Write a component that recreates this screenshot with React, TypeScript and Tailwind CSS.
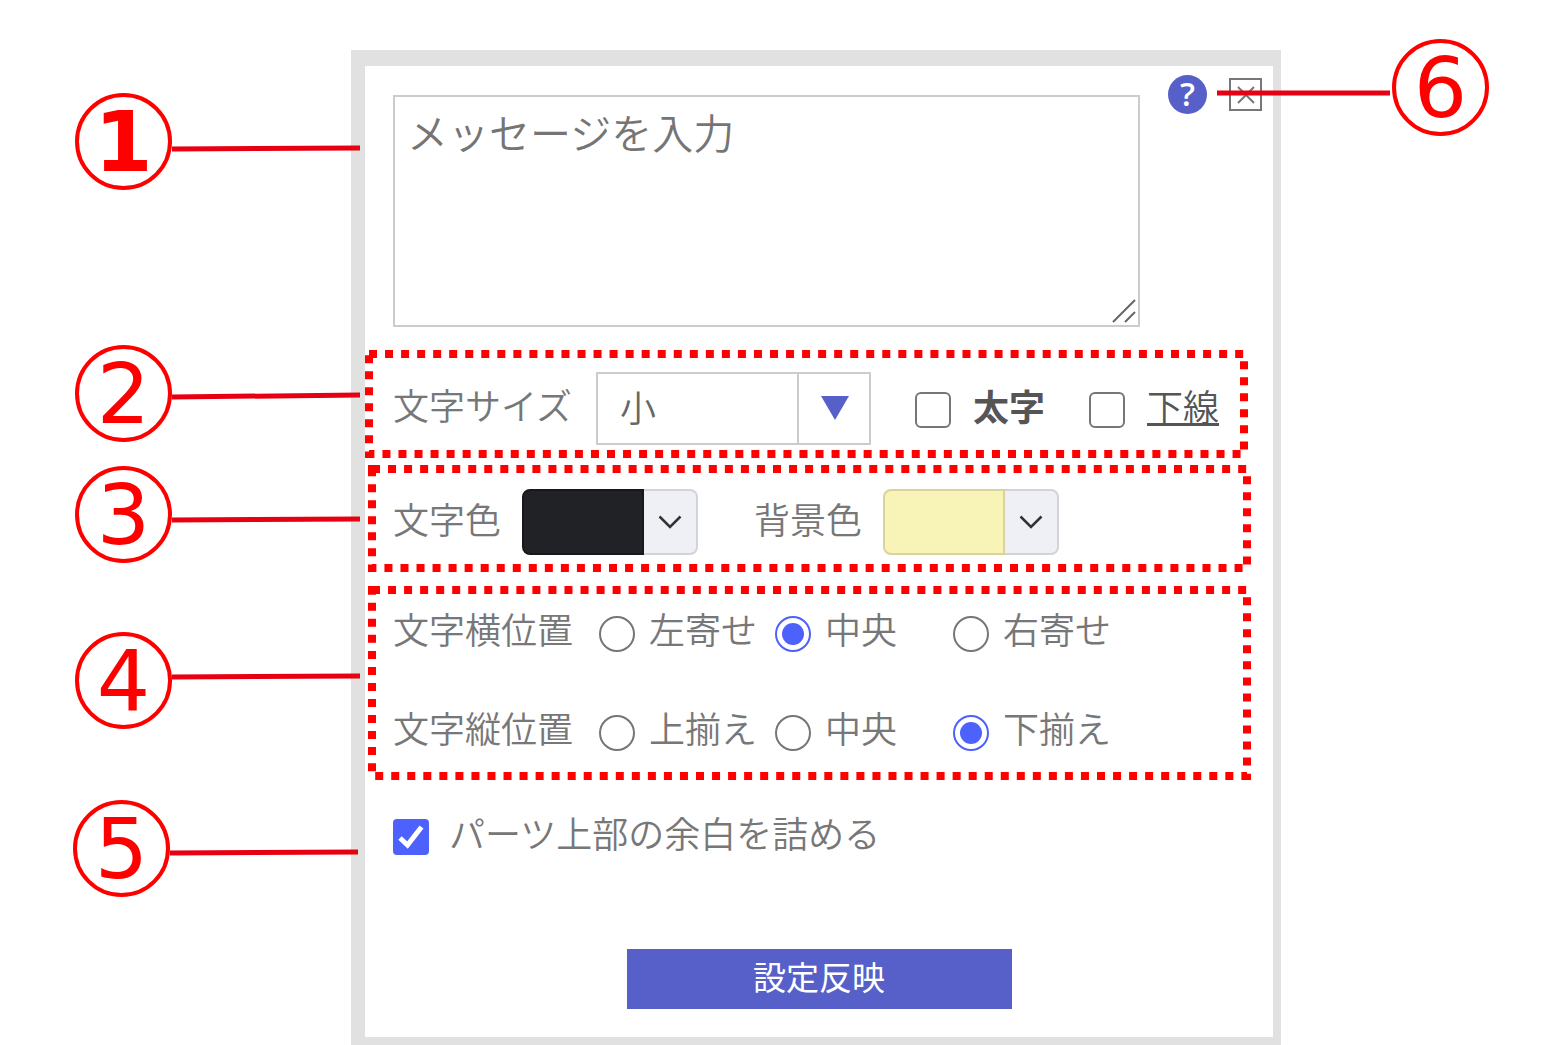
import { useState } from "react";
import type { ReactNode } from "react";

interface CalloutProps {
	number: number;
	from: number;
	to: number;
	className: string;
	bold?: boolean;
	flipped?: boolean;
}

interface RadioRowProps {
	name: string;
	legend: string;
	options: string[];
	value: string;
	onChange: (value: string) => void;
}

interface CheckFieldProps {
	checked: boolean;
	onChange: (checked: boolean) => void;
	className?: string;
	children: ReactNode;
}

interface ColorPickerProps {
	label: string;
	swatchClass: string;
}

// Numbered circle with a leader line that runs to the panel
function Callout({ number, from, to, className, bold, flipped }: CalloutProps) {
	return (
		<div
			className={`pointer-events-none absolute z-10 flex ${
				flipped ? "flex-row-reverse" : ""
			} ${className}`}
		>
			<span
				className={`flex size-[97px] shrink-0 items-center justify-center rounded-full border-4 border-[#ff0000] font-['DejaVu_Sans',sans-serif] text-[84px] leading-none text-[#ff0000] ${
					bold ? "font-bold" : "font-normal"
				}`}
			>
				{number}
			</span>
			<svg
				className={`h-[97px] shrink-0 ${flipped ? "w-[175px]" : "w-[188px]"}`}
				aria-hidden="true"
			>
				<line
					x1="0"
					y1={from}
					x2={flipped ? 173 : 188}
					y2={to}
					stroke="#e60012"
					strokeWidth="5"
				/>
			</svg>
		</div>
	);
}

function DottedFrame() {
	return (
		<svg
			className="pointer-events-none absolute inset-0 size-full"
			aria-hidden="true"
		>
			<rect
				x="4"
				y="4"
				className="h-[calc(100%-8px)] w-[calc(100%-8px)]"
				fill="none"
				stroke="#ff0000"
				strokeWidth="8"
				strokeDasharray="8 8.04"
			/>
		</svg>
	);
}

function CheckField({
	checked,
	onChange,
	className = "",
	children,
}: CheckFieldProps) {
	return (
		<label className={`flex h-12 items-center ${className}`}>
			<span className="relative mt-1 size-9 shrink-0">
				<input
					type="checkbox"
					checked={checked}
					onChange={(e) => onChange(e.target.checked)}
					className="peer block size-9 appearance-none rounded-md border-2 border-[#767676] bg-white checked:rounded-sm checked:border-[#4d61fc] checked:bg-[#4d61fc]"
				/>
				<svg
					viewBox="0 0 36 36"
					className="pointer-events-none absolute inset-0 hidden size-9 peer-checked:block"
					aria-hidden="true"
				>
					<path
						d="M7 19 L14.500 26 L28.500 8"
						fill="none"
						stroke="#fff"
						strokeWidth="5"
					/>
				</svg>
			</span>
			<span className="pb-1.5">{children}</span>
		</label>
	);
}

function ColorPicker({ label, swatchClass }: ColorPickerProps) {
	return (
		<div className="flex items-center">
			<span className="w-[129px] pb-2">{label}</span>
			<button type="button" aria-label={label} className="flex h-[66px]">
				<span className={`w-[122px] rounded-l-lg border-2 ${swatchClass}`} />
				<span className="flex w-[54px] items-center justify-center rounded-r-lg border-2 border-l-0 border-[#d3d4d9] bg-[#eff0f5]">
					<svg viewBox="0 0 24 14" className="h-[14px] w-6" aria-hidden="true">
						<path
							d="M1.500 1.500 L12 12 L22.500 1.500"
							fill="none"
							stroke="#333"
							strokeWidth="2.500"
						/>
					</svg>
				</span>
			</button>
		</div>
	);
}

function RadioRow({ name, legend, options, value, onChange }: RadioRowProps) {
	return (
		<div
			role="radiogroup"
			aria-label={legend}
			className="grid h-12 grid-cols-[206px_176px_178px_1fr] items-center"
		>
			<span className="pb-2">{legend}</span>
			{options.map((option) => (
				<label key={option} className="flex h-12 items-center gap-[14px]">
					<input
						type="radio"
						name={name}
						checked={value === option}
						onChange={() => onChange(option)}
						className="mt-1 size-9 shrink-0 appearance-none rounded-full border-2 border-[#767676] bg-clip-content p-[5px] checked:border-[#4d61fc] checked:bg-[#4d61fc]"
					/>
					<span className="pb-2">{option}</span>
				</label>
			))}
		</div>
	);
}

export default function App() {
	const [message, setMessage] = useState("");
	const [size, setSize] = useState("小");
	const [bold, setBold] = useState(false);
	const [underline, setUnderline] = useState(false);
	const [horizontal, setHorizontal] = useState("中央");
	const [vertical, setVertical] = useState("下揃え");
	const [trimTop, setTrimTop] = useState(true);

	return (
		<main className="bg-white pt-[50px] pr-[281px] pl-[351px] font-['Noto_Sans_CJK_JP',sans-serif] text-[36px] leading-[48px] font-[350] text-[#777]">
			<div className="min-w-[930px] border-t-[16px] border-r-8 border-b-8 border-l-[14px] border-[#e1e1e1] bg-white">
				{/* Message */}
				<section className="relative flex items-start pt-[9px] pr-[11px] pb-[23px] pl-7">
					<Callout
						number={1}
						from={56}
						to={55}
						bold
						className="top-[27px] right-full mr-[5px]"
					/>
					<div className="relative mt-5 flex-1">
						<textarea
							aria-label="メッセージ"
							placeholder="メッセージを入力"
							value={message}
							onChange={(e) => setMessage(e.target.value)}
							className="block h-[232px] w-full resize-none border-2 border-[#ccc] px-3 py-[10px] text-[41px] placeholder:text-[#757575]"
						/>
						<svg
							viewBox="0 0 24 24"
							className="pointer-events-none absolute right-1 bottom-1 size-6"
							aria-hidden="true"
						>
							<path
								d="M1 23 L23 1 M13 23 L23 13"
								fill="none"
								stroke="#666"
								strokeWidth="2"
							/>
						</svg>
					</div>
					<button
						type="button"
						aria-label="ヘルプ"
						className="ml-7 flex size-[39px] items-center justify-center rounded-full bg-[#5660c8] pb-0.5 font-['Open_Sans',sans-serif] text-[33px] leading-none font-semibold text-white"
					>
						?
					</button>
					<button
						type="button"
						aria-label="閉じる"
						className="mt-[3px] ml-[22px] flex size-[33px] items-center justify-center border-2 border-[#777]"
					>
						<svg viewBox="0 0 18 18" className="size-[18px]" aria-hidden="true">
							<path
								d="M1 1 L17 17 M17 1 L1 17"
								fill="none"
								stroke="#777"
								strokeWidth="2"
							/>
						</svg>
					</button>
					<Callout
						number={6}
						from={54}
						to={54}
						flipped
						className="-top-[27px] -right-[216px]"
					/>
				</section>

				{/* Size and decoration */}
				<section className="relative">
					<Callout
						number={2}
						from={52}
						to={50}
						className="-top-[5px] right-full mr-[5px]"
					/>
					<div className="relative mr-[25px] flex h-[108px] items-center pt-2 pl-7">
						<DottedFrame />
						<label htmlFor="font-size" className="w-[203px] pb-2">
							文字サイズ
						</label>
						<div className="relative">
							<select
								id="font-size"
								value={size}
								onChange={(e) => setSize(e.target.value)}
								className="block h-[73px] w-[275px] appearance-none border-2 border-[#ccc] bg-white pb-1 pl-[22px] text-[#666]"
							>
								<option>小</option>
								<option>中</option>
								<option>大</option>
							</select>
							<span className="pointer-events-none absolute inset-y-0 right-0 flex w-[74px] items-center justify-center border-l-2 border-[#ccc]">
								<svg viewBox="0 0 28 24" className="h-6 w-7" aria-hidden="true">
									<path d="M0 0 H28 L14 24 Z" fill="#5660c8" />
								</svg>
							</span>
						</div>
						<CheckField
							checked={bold}
							onChange={setBold}
							className="ml-11 gap-[22px] font-bold text-[#555]"
						>
							太字
						</CheckField>
						<CheckField
							checked={underline}
							onChange={setUnderline}
							className="ml-11 gap-[22px] text-[#555] underline"
						>
							下線
						</CheckField>
					</div>
				</section>

				{/* Colours */}
				<section className="relative mt-[7px]">
					<Callout
						number={3}
						from={54}
						to={53}
						className="top-px right-full mr-[5px]"
					/>
					<div className="relative mr-[22px] ml-[3px] flex h-[107px] items-center gap-14 pt-1.5 pl-[25px]">
						<DottedFrame />
						<ColorPicker
							label="文字色"
							swatchClass="border-[#17181b] bg-[#212225]"
						/>
						<ColorPicker
							label="背景色"
							swatchClass="border-[#d8d49c] bg-[#f8f3b6]"
						/>
					</div>
				</section>

				{/* Text position */}
				<section className="relative mt-[14px]">
					<Callout
						number={4}
						from={45}
						to={44}
						className="top-[46px] right-full mr-[5px]"
					/>
					<div className="relative mr-[22px] ml-[3px] flex h-[194px] flex-col gap-[51px] pt-[18px] pl-[25px]">
						<DottedFrame />
						<RadioRow
							name="horizontal"
							legend="文字横位置"
							options={["左寄せ", "中央", "右寄せ"]}
							value={horizontal}
							onChange={setHorizontal}
						/>
						<RadioRow
							name="vertical"
							legend="文字縦位置"
							options={["上揃え", "中央", "下揃え"]}
							value={vertical}
							onChange={setVertical}
						/>
					</div>
				</section>

				{/* Spacing */}
				<section className="relative mt-[31px] pl-7">
					<Callout
						number={5}
						from={53}
						to={52}
						className="-top-[11px] right-full mr-[7px]"
					/>
					<CheckField
						checked={trimTop}
						onChange={setTrimTop}
						className="w-fit gap-5"
					>
						パーツ上部の余白を詰める
					</CheckField>
				</section>

				<button
					type="button"
					className="mx-auto mt-[90px] mb-7 block h-[60px] w-[385px] bg-[#5660c8] pb-1.5 text-[33px] font-normal text-white"
				>
					設定反映
				</button>
			</div>
		</main>
	);
}
